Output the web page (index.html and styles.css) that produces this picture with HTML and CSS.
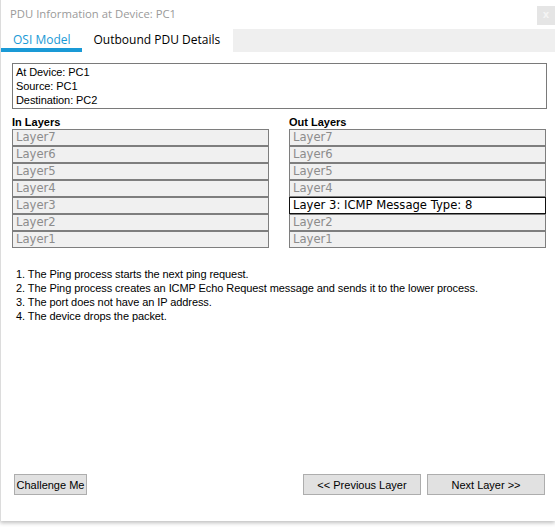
FILE: index.html
```html
<!DOCTYPE html>
<html>
<head>
<meta charset="utf-8">
<link rel="stylesheet" href="styles.css">
</head>
<body>
<div class="window">
  <div class="titlebar">
    <span class="title">PDU Information at Device: PC1</span>
    <span class="close">x</span>
  </div>
  <div class="tabs">
    <div class="tab active">OSI Model</div>
    <div class="tab">Outbound PDU Details</div>
    <div class="tab-fill"></div>
  </div>
  <div class="content">
    <div class="info">
      <div>At Device: PC1</div>
      <div>Source: PC1</div>
      <div>Destination: PC2</div>
    </div>
    <div class="columns">
      <div class="col">
        <div class="col-head">In Layers</div>
        <div class="layers">
          <div class="layer">Layer7</div>
          <div class="layer">Layer6</div>
          <div class="layer">Layer5</div>
          <div class="layer">Layer4</div>
          <div class="layer">Layer3</div>
          <div class="layer">Layer2</div>
          <div class="layer">Layer1</div>
        </div>
      </div>
      <div class="col">
        <div class="col-head">Out Layers</div>
        <div class="layers">
          <div class="layer">Layer7</div>
          <div class="layer">Layer6</div>
          <div class="layer">Layer5</div>
          <div class="layer">Layer4</div>
          <div class="layer current">Layer 3: ICMP Message Type: 8</div>
          <div class="layer">Layer2</div>
          <div class="layer">Layer1</div>
        </div>
      </div>
    </div>
    <ol class="steps">
      <li>1. The Ping process starts the next ping request.</li>
      <li>2. The Ping process creates an ICMP Echo Request message and sends it to the lower process.</li>
      <li>3. The port does not have an IP address.</li>
      <li>4. The device drops the packet.</li>
    </ol>
  </div>
  <div class="footer">
    <button class="btn challenge">Challenge Me</button>
    <div class="nav">
      <button class="btn wide">&lt;&lt; Previous Layer</button>
      <button class="btn wide">Next Layer &gt;&gt;</button>
    </div>
  </div>
</div>
</body>
</html>
```

FILE: styles.css
```css
html, body {
  margin: 0;
  padding: 0;
  background: #ffffff;
}
body {
  width: 555px;
  height: 527px;
  overflow: hidden;
  font-family: "Liberation Sans", Arial, sans-serif;
}
.window {
  width: 554px;
  height: 521px;
  background: #ffffff;
  border-left: 1px solid #dcdcdc;
  box-shadow: 0 2px 4px rgba(0, 0, 0, 0.25);
  display: flex;
  flex-direction: column;
}
.titlebar {
  height: 29px;
  display: flex;
  align-items: flex-start;
  justify-content: space-between;
}
.title {
  font-family: "Open Sans", "Noto Sans", sans-serif;
  font-size: 11.3px;
  color: #9a9a9a;
  margin: 5px 0 0 9px;
  line-height: 17px;
}
.close {
  margin-top: 6px;
  width: 18px;
  height: 19px;
  background: #e5e5e5;
  color: #f4f4f4;
  font-family: "DejaVu Sans", sans-serif;
  font-size: 10px;
  font-weight: bold;
  line-height: 18px;
  text-align: center;
}
.tabs {
  height: 23px;
  display: flex;
  font-family: "Open Sans", "Noto Sans", sans-serif;
  font-size: 12px;
}
.tab {
  line-height: 22px;
  color: #000000;
  padding: 0 13px 0 12px;
}
.tab.active {
  color: #1a9ad6;
  border-bottom: 4px solid #1a9ad6;
  height: 19px;
  line-height: 22px;
  padding: 0 11px 0 12px;
}
.tab-fill {
  flex: 1;
  background: #efefef;
}
.content {
  padding: 11px 8px 0 11px;
  flex: 1;
}
.info {
  border: 1px solid #7a7a7a;
  padding: 1px 3px;
  font-size: 11px;
  line-height: 14px;
  letter-spacing: -0.08px;
  color: #000;
}
.columns {
  display: grid;
  grid-template-columns: 257px 257px;
  column-gap: 20px;
  margin-top: 7px;
}
.col-head {
  font-size: 11px;
  font-weight: bold;
  line-height: 13px;
  color: #000;
}
.layers {
  display: flex;
  flex-direction: column;
}
.layer {
  height: 15px;
  border: 1px solid #7e7e7e;
  background: #f0f0f0;
  color: #8c8c8c;
  font-family: "DejaVu Sans", Verdana, sans-serif;
  font-size: 11.6px;
  line-height: 14px;
  padding: 0 3px;
  white-space: nowrap;
  overflow: hidden;
}
.layer.current {
  background: #ffffff;
  border-color: #111111;
  color: #000000;
}
.steps {
  list-style: none;
  margin: 19px 0 0 0;
  padding: 0 0 0 4px;
  font-size: 11px;
  line-height: 14px;
  letter-spacing: -0.08px;
  color: #000;
}
.footer {
  display: flex;
  justify-content: space-between;
  padding: 0 10px 26px 13px;
}
.nav {
  display: flex;
  gap: 6px;
}
.btn {
  height: 21px;
  border: 1px solid #adadad;
  background: #e1e1e1;
  font-family: "Liberation Sans", Arial, sans-serif;
  font-size: 11px;
  color: #000;
  padding: 0;
  margin: 0;
}
.challenge {
  width: 73px;
}
.wide {
  width: 118px;
}
```
